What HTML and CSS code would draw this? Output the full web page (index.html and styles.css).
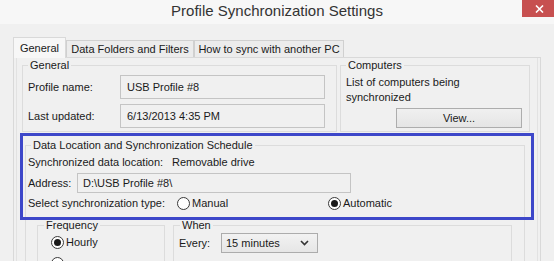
FILE: index.html
```html
<!DOCTYPE html>
<html lang="en">
<head>
    <meta charset="UTF-8">
    <title>Profile Synchronization Settings</title>
    <link rel="stylesheet" href="styles.css">
</head>
<body>
    <div class="titlebar">
        <span></span>
        <div class="title">Profile Synchronization Settings</div>
        <div class="close-btn">
            <svg width="9" height="8" viewBox="0 0 9 8"><path d="M1 0.5 L8 7.5 M8 0.5 L1 7.5" stroke="#fff" stroke-width="1.6" fill="none"/></svg>
        </div>
    </div>

    <div class="content">
        <div class="tabs">
            <div class="tab tab-active tab-general">General</div>
            <div class="tab tab-folders">Data Folders and Filters</div>
            <div class="tab tab-howto">How to sync with another PC</div>
        </div>

        <div class="panel">
            <div class="page">
                <div class="top-row">
                    <fieldset class="group">
                        <legend>General</legend>
                        <div class="field-grid">
                            <span>Profile name:</span>
                            <div class="textbox">USB Profile #8</div>
                            <span>Last updated:</span>
                            <div class="textbox">6/13/2013 4:35 PM</div>
                        </div>
                    </fieldset>
                    <fieldset class="group">
                        <legend>Computers</legend>
                        <p class="computers-text">List of computers being<br>synchronized</p>
                        <button class="btn">View...</button>
                    </fieldset>
                </div>

                <div class="location-wrap">
                    <fieldset class="group group-location">
                        <legend>Data Location and Synchronization Schedule</legend>
                        <div class="loc-line">
                            <span class="loc-label">Synchronized data location:</span>
                            <span>Removable drive</span>
                        </div>
                        <div class="loc-line addr-line">
                            <span class="addr-label">Address:</span>
                            <div class="textbox textbox-addr">D:\USB Profile #8\</div>
                        </div>
                        <div class="loc-line type-line">
                            <span class="type-label">Select synchronization type:</span>
                            <label class="radio-opt radio-opt-first"><span class="radio"></span>Manual</label>
                            <label class="radio-opt"><span class="radio radio-checked"></span>Automatic</label>
                        </div>

                        <div class="schedule">
                            <fieldset class="group group-freq">
                                <legend>Frequency</legend>
                                <label class="radio-opt freq-opt"><span class="radio radio-checked"></span>Hourly</label>
                                <div class="radio-opt freq-opt freq-opt-next"><span class="radio"></span></div>
                            </fieldset>
                            <fieldset class="group group-when">
                                <legend>When</legend>
                                <div class="when-line">
                                    <span class="every-label">Every:</span>
                                    <div class="select">
                                        <span>15 minutes</span>
                                        <svg width="9" height="6" viewBox="0 0 9 6"><path d="M1 1 L4.5 4.5 L8 1" stroke="#333" stroke-width="1.6" fill="none"/></svg>
                                    </div>
                                </div>
                            </fieldset>
                        </div>
                    </fieldset>
                    <div class="highlight"></div>
                </div>
            </div>
        </div>
    </div>
</body>
</html>
```

FILE: styles.css
```css
body {
    margin: 0;
    width: 554px;
    height: 261px;
    overflow: hidden;
    background-color: #f0f0f0;
    font-family: "Liberation Sans", Arial, sans-serif;
    font-size: 11px;
    color: #1a1a1a;
}
.titlebar {
    height: 24px;
    background-color: #f7f7f7;
    display: grid;
    grid-template-columns: 1fr auto 1fr;
    align-items: start;
}
.title {
    font-size: 15px;
    line-height: 22px;
    color: #333;
}
.close-btn {
    justify-self: end;
    width: 32px;
    height: 17px;
    background-color: #c75050;
    display: flex;
    align-items: center;
    justify-content: center;
    padding-left: 2px;
    box-sizing: border-box;
}
.content {
    padding: 13px 0 0 13px;
}
.tabs {
    display: flex;
    align-items: flex-end;
    height: 20px;
}
.tab {
    box-sizing: border-box;
    height: 17px;
    line-height: 16px;
    text-align: center;
    border: 1px solid #d0d0d0;
    border-bottom: none;
    background-color: #ececec;
}
.tab-active {
    position: relative;
    z-index: 1;
    height: 21px;
    margin-bottom: -1px;
    line-height: 20px;
    background-color: #f7f7f7;
    border-color: #d9d9d9;
}
.tab-general {
    width: 53px;
}
.tab-folders {
    width: 128px;
}
.tab-howto {
    width: 150px;
}
.panel {
    box-sizing: border-box;
    width: 528px;
    height: 220px;
    border: 1px solid #d9d9d9;
    background-color: #f0f0f0;
}
.page {
    box-sizing: border-box;
    width: 522px;
    height: 100%;
    margin-left: 2px;
    padding-left: 5px;
    border-left: 1px solid #e2e2e2;
    border-right: 1px solid #e2e2e2;
}
.group {
    margin: 0;
    padding: 0 5px 3px;
    border: 1px solid #dcdcdc;
    min-width: 0;
}
.group legend {
    padding: 0 2px;
    line-height: 15px;
}
.top-row {
    display: grid;
    grid-template-columns: 315px 190px;
    column-gap: 3px;
}
.field-grid {
    display: grid;
    grid-template-columns: 92px 205px;
    row-gap: 5px;
    align-items: center;
    margin-top: 2px;
}
.textbox {
    box-sizing: border-box;
    height: 24px;
    line-height: 22px;
    padding: 0 6px;
    border: 1px solid #c4c4c4;
    background-color: #f0f0f0;
}
.computers-text {
    margin: 2px 0 0;
    line-height: 15px;
}
.btn {
    display: block;
    width: 126px;
    height: 20px;
    margin: 3px 2px 0 auto;
    padding: 0;
    font-family: inherit;
    font-size: 11px;
    color: #1a1a1a;
    border: 1px solid #adadad;
    background: linear-gradient(#f0f0f0, #e5e5e5);
}
.location-wrap {
    position: relative;
    margin-top: 6px;
}
.group-location {
    margin-left: 3px;
    width: 500px;
    box-sizing: border-box;
    padding: 0 2px;
}
.group-location > legend {
    margin-left: 3px;
}
.loc-line {
    display: flex;
    align-items: center;
    line-height: 15px;
    margin-top: 2px;
}
.loc-label {
    width: 144px;
}
.addr-line {
    margin-top: 3px;
}
.addr-label {
    width: 49px;
}
.textbox-addr {
    width: 274px;
    height: 20px;
    line-height: 18px;
    padding: 0 5px;
}
.type-line {
    margin-top: 3px;
}
.type-label {
    width: 149px;
}
.radio-opt {
    display: flex;
    align-items: center;
    gap: 2px;
    line-height: 15px;
}
.radio-opt-first {
    width: 151px;
}
.radio {
    box-sizing: border-box;
    width: 13px;
    height: 13px;
    border: 1px solid #3a3a3a;
    border-radius: 50%;
    background-color: #fff;
    display: flex;
    align-items: center;
    justify-content: center;
}
.radio-checked::after {
    content: "";
    width: 7px;
    height: 7px;
    border-radius: 50%;
    background-color: #1a1a1a;
}
.schedule {
    display: flex;
    gap: 8px;
    margin: 7px 0 0 9px;
}
.group-freq {
    box-sizing: border-box;
    width: 128px;
    height: 60px;
}
.group-freq > legend,
.group-when > legend {
    margin-left: 1px;
}
.freq-opt {
    margin: 2px 0 0 8px;
}
.freq-opt-next {
    margin-top: 7px;
}
.group-when {
    box-sizing: border-box;
    width: 339px;
    height: 60px;
}
.when-line {
    display: flex;
    align-items: center;
}
.every-label {
    width: 42px;
}
.select {
    box-sizing: border-box;
    width: 97px;
    height: 20px;
    padding: 0 8px 0 4px;
    display: flex;
    align-items: center;
    justify-content: space-between;
    border: 1px solid #acacac;
    background: linear-gradient(#f2f2f2, #e6e6e6);
}
.highlight {
    position: absolute;
    left: -2px;
    top: -5px;
    width: 514px;
    height: 87px;
    box-sizing: border-box;
    border: 3px solid #3d47c9;
    pointer-events: none;
}
```
